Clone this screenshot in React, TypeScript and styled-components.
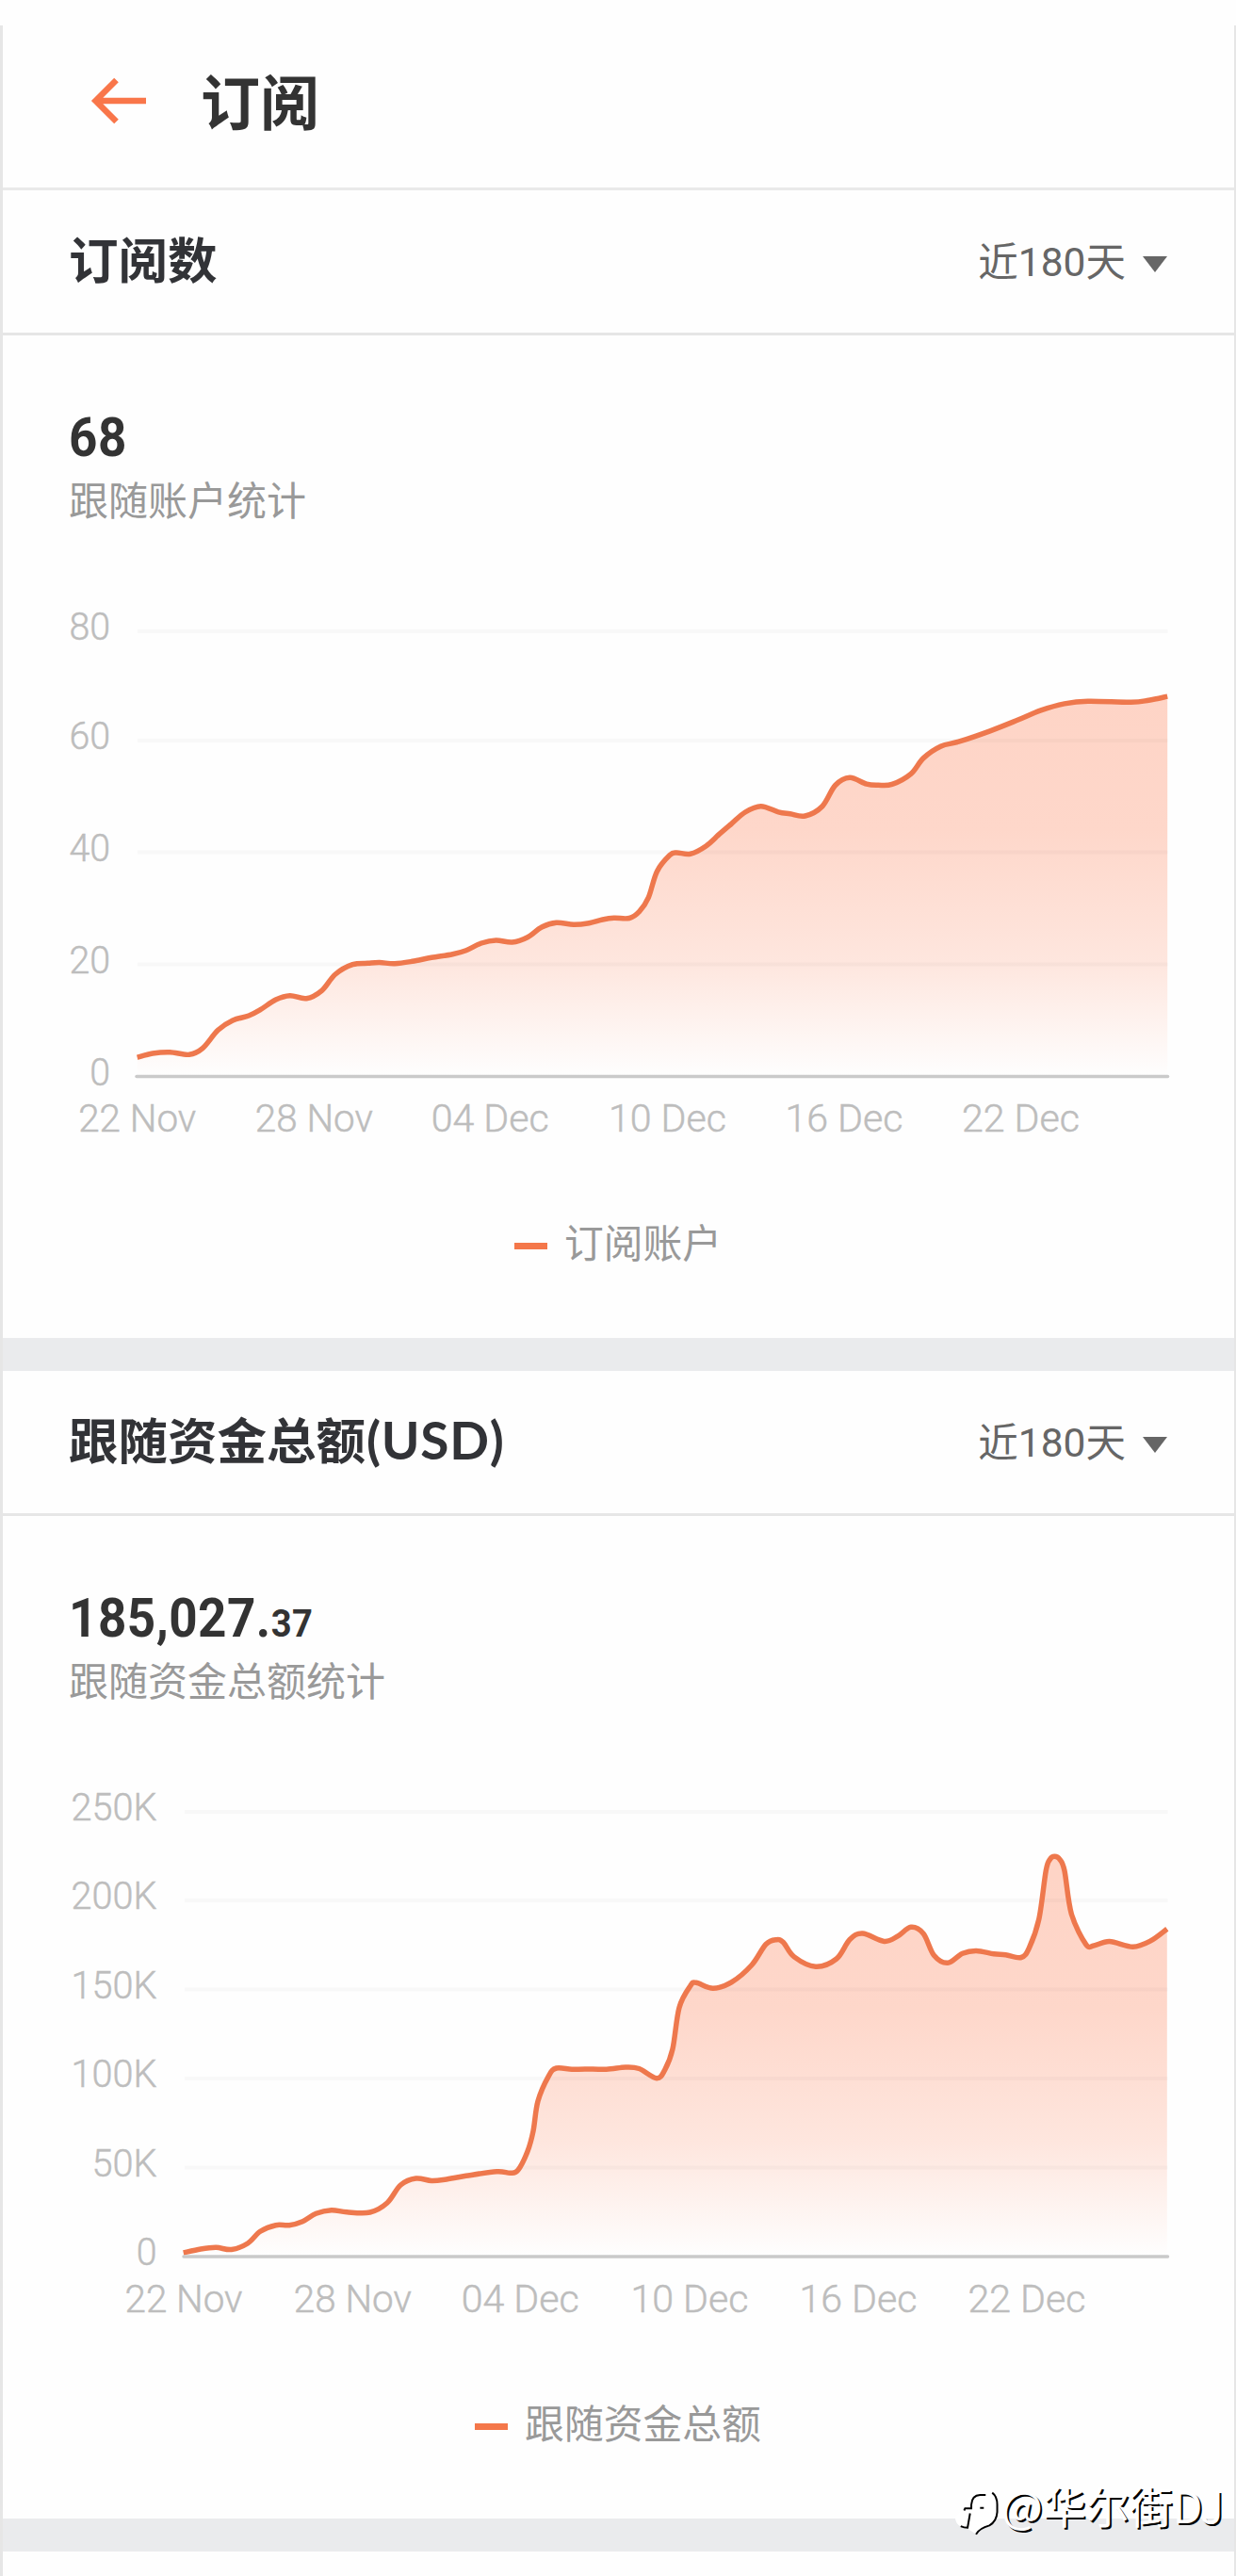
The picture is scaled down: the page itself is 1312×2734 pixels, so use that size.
import React from 'react';
import styled, { createGlobalStyle } from 'styled-components';

const GlobalStyle = createGlobalStyle`
  body { margin: 0; background: #fefefe; }
  * { box-sizing: border-box; }
`;

const cjk = `'Noto Sans CJK SC', sans-serif`;
const digits = `Roboto, 'Noto Sans CJK SC', sans-serif`;

const Screen = styled.div`
  position: relative;
  width: 1312px;
  height: 2734px;
  padding-top: 27px;
  overflow: hidden;
  background: #fefefe;
  font-family: ${cjk};
`;

const Panel = styled.div`
  display: flex;
  flex-direction: column;
  height: 2707px;
  border-left: 3px solid #e6e6e6;
  border-right: 2px solid #e6e6e6;
`;

const TopBar = styled.header`
  display: flex;
  align-items: center;
  flex: none;
  height: 175px;
  padding: 0 0 12px 93px;
  border-bottom: 3px solid #e9e9e9;
`;

const BackIcon = styled.svg`
  width: 60px;
  height: 50px;
`;

const PageTitle = styled.h1`
  margin: -4px 0 0 57px;
  color: #333;
  font-size: 63px;
  font-weight: 700;
  line-height: 80px;
`;

const SectionHeader = styled.div`
  display: flex;
  align-items: center;
  justify-content: space-between;
  flex: none;
  height: 154px;
  padding: 0 71px 0 70px;
  border-bottom: 3px solid #e6e6e6;
`;

const SectionTitle = styled.h2`
  height: 79px;
  margin: 0;
  color: #323337;
  font-size: 52.5px;
  font-weight: 700;
  line-height: 70px;
`;

const Unit = styled.span`
  margin-left: 1px;
  font-family: Lato, sans-serif;
  font-size: 55px;
  letter-spacing: 0.7px;
`;

const Range = styled.button`
  display: flex;
  align-items: center;
  gap: 18px;
  height: 60px;
  margin-top: 2px;
  padding: 0;
  border: 0;
  background: none;
  color: #666;
  font-family: ${digits};
  font-size: 42.5px;
  line-height: 60px;
`;

const Caret = styled.span`
  border: 13.5px solid transparent;
  border-top: 17px solid #666;
  border-bottom: 0;
  margin-top: 3px;
`;

const Body = styled.div`
  display: flex;
  flex-direction: column;
  flex: none;
  height: 1064px;
  padding-top: 79px;
`;

const Value = styled.div`
  align-self: flex-start;
  height: 60px;
  margin-left: 70px;
  color: #333;
  font-family: ${digits};
  font-size: 57px;
  font-weight: 700;
  letter-spacing: 0.5px;
  line-height: 60px;
  transform: scaleX(0.93);
  transform-origin: left;
`;

const Decimals = styled.span`
  font-size: 41px;
  line-height: 1;
`;

const Caption = styled.div`
  height: 60px;
  margin: 4px 0 0 70px;
  color: #999;
  font-size: 42px;
  line-height: 60px;
`;

const Plot = styled.svg`
  display: block;
  flex: none;
  width: 1307px;
  height: 640px;
  margin-top: 41px;
`;

const AxisText = styled.text`
  fill: #bdbdbd;
  stroke: #bdbdbd;
  stroke-width: 0.5px;
  font-family: Roboto, sans-serif;
  font-size: 41.5px;
  font-weight: 300;
`;

const Legend = styled.div`
  display: flex;
  align-items: center;
  justify-content: center;
  gap: 18px;
  height: 60px;
  margin-top: 47px;
  padding-right: 1px;
  color: #999;
  font-size: 41.8px;
  line-height: 60px;
`;

const Dash = styled.span`
  width: 35px;
  height: 7px;
  margin-top: 10px;
  background: #f4774a;
`;

const Divider = styled.div`
  flex: none;
  height: 35px;
  background: #eaebed;
`;

const Watermark = styled.div`
  position: absolute;
  right: 13px;
  bottom: 42px;
  display: flex;
  align-items: center;
  color: #fff;
  font-size: 46px;
  line-height: 66px;
  white-space: nowrap;
  text-shadow: 2px 2px 0 #000;
`;

const WatermarkLogo = styled.svg`
  width: 50px;
  height: 53px;
  margin-top: 15px;
`;

type Point = [number, number];
type Tick = { label: string; y: number };
type Label = { text: string; x: number };

type ChartProps = {
  id: string;
  top: number;
  left: number;
  labelRight: number;
  axisY: number;
  ticks: Tick[];
  labels: Label[];
  points: Point[];
};

// Catmull-Rom spline through all points, as cubic segments.
const spline = (p: Point[]) =>
  p.slice(1).reduce((d, end, i) => {
    const start = p[i];
    const before = p[i - 1] || start;
    const after = p[i + 2] || end;
    const c1 = [start[0] + (end[0] - before[0]) / 6, start[1] + (end[1] - before[1]) / 6];
    const c2 = [end[0] - (after[0] - start[0]) / 6, end[1] - (after[1] - start[1]) / 6];
    return `${d}C${c1.join(' ')} ${c2.join(' ')} ${end.join(' ')}`;
  }, `M${p[0].join(' ')}`);

const RIGHT = 1240;

function AreaChart({ id, top, left, labelRight, axisY, ticks, labels, points }: ChartProps) {
  const line = spline(points);
  const first = points[0];
  const last = points[points.length - 1];
  return (
    <Plot viewBox={`3 ${top} 1307 640`}>
      <defs>
        <linearGradient id={id} gradientUnits="userSpaceOnUse" x1="0" x2="0" y1={axisY - 403} y2={axisY}>
          <stop offset="0" stopColor="#fed4c6" />
          <stop offset="0.35" stopColor="#fed7ca" />
          <stop offset="0.7" stopColor="#fee6de" />
          <stop offset="1" stopColor="#fefefe" />
        </linearGradient>
      </defs>
      <path d={`${line}L${last[0]} ${axisY}L${first[0]} ${axisY}Z`} fill={`url(#${id})`} />
      {ticks.map((t) => (
        <React.Fragment key={t.label}>
          {t.y !== axisY && (
            <line x1={left + 1} x2={RIGHT - 0.5} y1={t.y} y2={t.y} stroke="#000" strokeOpacity="0.025" strokeWidth="4" />
          )}
          <AxisText
            x={labelRight}
            y={t.y + 9}
            textAnchor="end"
            textLength={[...t.label].reduce((w, c) => w + (c === 'K' ? 25.5 : 21.8), 0)}
            lengthAdjust="spacingAndGlyphs"
          >
            {t.label}
          </AxisText>
        </React.Fragment>
      ))}
      <path d={line} fill="none" stroke="#ee784d" strokeWidth="5.5" strokeLinejoin="round" />
      <line x1={left} x2={RIGHT - 0.5} y1={axisY} y2={axisY} stroke="#cacaca" strokeWidth="3.5" strokeLinecap="round" />
      {labels.map((l) => (
        <AxisText
          key={l.text}
          x={l.x}
          y={axisY + 58.5}
          textAnchor="middle"
          textLength="125"
          lengthAdjust="spacingAndGlyphs"
        >
          {l.text}
        </AxisText>
      ))}
    </Plot>
  );
}

const days = (xs: number[]): Label[] =>
  ['22 Nov', '28 Nov', '04 Dec', '10 Dec', '16 Dec', '22 Dec'].map((text, i) => ({ text, x: xs[i] }));

const accounts: Point[] = [
  [145.7, 1122.3], [162, 1118], [180.4, 1116.7], [200.8, 1119.3], [215, 1112.7], [231.4, 1093.3], [247, 1083],
  [264, 1078], [276.3, 1071.7], [292.7, 1061], [307.8, 1056.7], [325.3, 1059.7], [341.6, 1051.3], [356, 1034],
  [374.3, 1023.7], [390.6, 1022.3], [402.9, 1021.6], [419, 1022.7], [437.6, 1020.3], [458, 1016.3], [480.4, 1012.7],
  [494.7, 1008.7], [511, 1001], [526.5, 997.9], [543.7, 1000], [560, 994.7], [575, 984], [590.6, 979.3],
  [609, 981.3], [625.3, 979.7], [639.6, 976], [651.8, 974.3], [668, 974.5], [678.7, 967.4], [688.3, 952.6],
  [697.4, 924.9], [711, 907.6], [718.2, 904.9], [732.8, 906.2], [749.4, 897.9], [764, 884.9], [776.4, 874.3],
  [791, 862], [807.6, 855.7], [826.3, 861.8], [838.8, 863.8], [854.6, 866], [872.9, 855.7], [886.6, 833.5],
  [902, 825.3], [919.9, 832.2], [932.3, 833.3], [946.9, 832.4], [966.9, 821.3], [980.2, 804.6], [998.9, 792],
  [1017.6, 787.2], [1050.9, 775.8], [1080, 764.3], [1104.9, 753.9], [1129.9, 746.9], [1154.8, 744.2],
  [1200.5, 745.2], [1219.3, 743.2], [1239.2, 739.1],
];

const funds: Point[] = [
  [194.7, 2391], [213, 2387], [229.4, 2385.3], [245.7, 2387.5], [262.9, 2381], [276.3, 2368.3], [292.7, 2361.7],
  [307, 2361.7], [321.2, 2357.7], [335.5, 2349.3], [351.8, 2345.7], [368.2, 2347.8], [392.7, 2348], [411, 2338],
  [425.3, 2319], [441.6, 2312], [458, 2314.5], [472.2, 2313.3], [494.7, 2309.3], [527.3, 2304.7], [541.6, 2306.3],
  [549.8, 2303.3], [560, 2283.3], [566, 2261.7], [571, 2230], [582.4, 2203.3], [590.6, 2195], [607, 2196.3],
  [621, 2195.9], [643.7, 2196.3], [664, 2194], [678.4, 2195.5], [697, 2205.7], [705.7, 2196.9], [714, 2174.7],
  [721, 2130.7], [732.8, 2107.7], [739, 2104.3], [756.9, 2110.2], [776.4, 2103.9], [798, 2085.5], [813, 2063.5],
  [824.2, 2058.7], [831.5, 2061.5], [843, 2076.9], [865.8, 2087.2], [887.9, 2079], [902, 2058.5], [915.7, 2052],
  [938.6, 2060.4], [953, 2054.9], [966.9, 2045.3], [980.2, 2052.2], [991.4, 2075.2], [1006, 2083.3],
  [1021.7, 2073.3], [1036.3, 2070.4], [1055, 2073.8], [1067.5, 2074.8], [1084, 2077.5], [1092.4, 2067.5],
  [1102.8, 2036.9], [1110.3, 1985.2], [1114.8, 1973], [1119.5, 1970.3], [1124.6, 1973], [1129.9, 1985.2],
  [1137.3, 2031.2], [1152.7, 2063.7], [1161, 2065], [1177.7, 2060.5], [1202.6, 2066.2], [1221.3, 2059.9],
  [1238.8, 2047.2],
];

function RangeSelect() {
  return (
    <Range>
      近180天
      <Caret />
    </Range>
  );
}

export default function App() {
  return (
    <Screen>
      <GlobalStyle />
      <Panel>
        <TopBar>
          <BackIcon viewBox="0 0 60 50" fill="none" stroke="#f9764a" strokeWidth="6.5">
            <path d="M59 25H6M27.5 3L5.5 25l22 22" />
          </BackIcon>
          <PageTitle>订阅</PageTitle>
        </TopBar>

        <SectionHeader>
          <SectionTitle>订阅数</SectionTitle>
          <RangeSelect />
        </SectionHeader>
        <Body>
          <Value>68</Value>
          <Caption>跟随账户统计</Caption>
          <AreaChart
            id="accounts-fill"
            top={600}
            left={145}
            labelRight={117}
            axisY={1142.5}
            ticks={[
              { label: '80', y: 670 },
              { label: '60', y: 786 },
              { label: '40', y: 904.5 },
              { label: '20', y: 1023.5 },
              { label: '0', y: 1142.5 },
            ]}
            labels={days([145.7, 333.3, 520.2, 708.5, 896, 1083.5])}
            points={accounts}
          />
          <Legend>
            <Dash />
            订阅账户
          </Legend>
        </Body>
        <Divider />

        <SectionHeader>
          <SectionTitle>
            跟随资金总额<Unit>(USD)</Unit>
          </SectionTitle>
          <RangeSelect />
        </SectionHeader>
        <Body>
          <Value>
            185,027.<Decimals>37</Decimals>
          </Value>
          <Caption>跟随资金总额统计</Caption>
          <AreaChart
            id="funds-fill"
            top={1853}
            left={195}
            labelRight={166.5}
            axisY={2395}
            ticks={[
              { label: '250K', y: 1923 },
              { label: '200K', y: 2017 },
              { label: '150K', y: 2111.5 },
              { label: '100K', y: 2206 },
              { label: '50K', y: 2300.5 },
              { label: '0', y: 2395 },
            ]}
            labels={days([195, 374.3, 552.2, 732, 911, 1090])}
            points={funds}
          />
          <Legend>
            <Dash />
            跟随资金总额
          </Legend>
        </Body>
        <Divider />
      </Panel>
      <Watermark>
        <WatermarkLogo viewBox="20 30 150 160" fill="none" stroke="#000" strokeWidth="6">
          <path
            d="M22 128Q24 160 60 164L88 182Q92 170 130 158Q156 146 158 110V84Q154 46 116 44Q72 44 60 80L46 104Z"
            fill="#fff"
            stroke="none"
          />
          <path d="M141 50Q157 62 157 88V112Q155 142 132 155Q100 164 89 183" />
          <path d="M51 107L54 100H74V88Q76 58 102 57H120" />
          <path d="M102 99H114M70 116L62 162Q50 162 40 157" />
        </WatermarkLogo>
        @华尔街DJ
      </Watermark>
    </Screen>
  );
}
